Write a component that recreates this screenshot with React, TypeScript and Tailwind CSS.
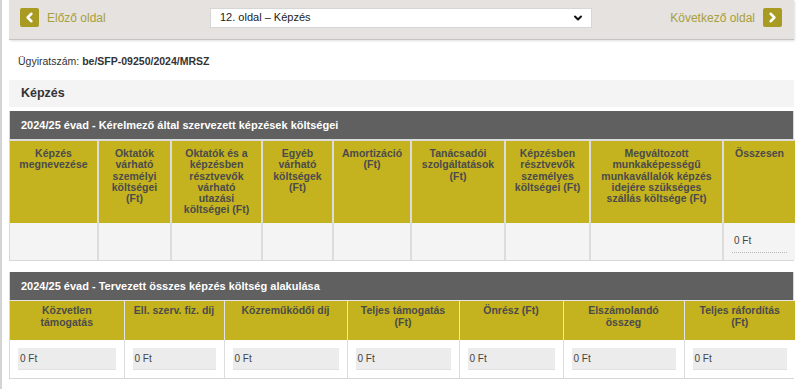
import { ChevronLeft, ChevronRight, ChevronDown } from 'lucide-react';

const costCols = [
  { w: 88, label: 'Képzés megnevezése' },
  { w: 73, label: 'Oktatók várható személyi költségei (Ft)' },
  { w: 91, label: 'Oktatók és a képzésben résztvevők várható utazási költségei (Ft)' },
  { w: 71, label: 'Egyéb várható költségek (Ft)' },
  { w: 78, label: 'Amortizáció (Ft)' },
  { w: 94, label: 'Tanácsadói szolgáltatások (Ft)' },
  { w: 85, label: 'Képzésben résztvevők személyes költségei (Ft)' },
  { w: 133, label: 'Megváltozott munkaképességű munkavállalók képzés idejére szükséges szállás költsége (Ft)' },
  { w: 72, label: 'Összesen' },
];

const totalCols = [
  { w: 114, label: 'Közvetlen támogatás' },
  { w: 100, label: 'Ell. szerv. fiz. díj' },
  { w: 123, label: 'Közreműködői díj' },
  { w: 112, label: 'Teljes támogatás (Ft)' },
  { w: 104, label: 'Önrész (Ft)' },
  { w: 121, label: 'Elszámolandó összeg' },
  { w: 111, label: 'Teljes ráfordítás (Ft)' },
];

function NavButton({ dir }: { dir: 'prev' | 'next' }) {
  const Ico = dir === 'prev' ? ChevronLeft : ChevronRight;
  return (
    <span className="flex h-[19px] w-[19px] items-center justify-center rounded-[2px] bg-[#a99b22]">
      <Ico size={15} strokeWidth={4} color="#fff" />
    </span>
  );
}

function SectionBar({ title }: { title: string }) {
  return (
    <div className="flex h-[28px] items-center bg-[#606060] px-[11px] text-[11px] font-bold text-white">
      {title}
    </div>
  );
}

export default function App() {
  return (
    <div
      className="flex h-[389px] w-[800px] border-l-2 border-[#d4d4d4] bg-white"
      style={{ fontFamily: '"Liberation Sans", Arial, sans-serif' }}
    >
      <div className="ml-[7px] w-[785px]">
        {/* page navigation */}
        <div className="flex h-[40px] items-center justify-between border-b border-[#c4c4c4] bg-[#e6e2e0] pl-[11px] pr-[12px] pb-[4px] shadow-[1px_1px_2px_rgba(0,0,0,0.12)]">
          <div className="flex w-[190px] items-center gap-[8px]">
            <NavButton dir="prev" />
            <span className="text-[12px] text-[#a8a03a]">Előző oldal</span>
          </div>
          <div className="flex h-[20px] w-[382px] items-center justify-between border border-[#d6d6d6] bg-white pl-[9px] pr-[7px] text-[11px] text-[#222]">
            <span>12. oldal – Képzés</span>
            <ChevronDown size={12} strokeWidth={4} color="#111" />
          </div>
          <div className="flex w-[190px] items-center justify-end gap-[8px]">
            <span className="text-[12px] text-[#a8a03a]">Következő oldal</span>
            <NavButton dir="next" />
          </div>
        </div>

        <div className="flex h-[40px] items-center pl-[9px] pt-[4px] text-[10.5px] text-[#333]">
          Ügyiratszám:&nbsp;<span className="font-semibold">be/SFP-09250/2024/MRSZ</span>
        </div>

        <div className="flex h-[27px] items-center bg-[#f4f4f4] px-[12px] text-[12.5px] font-bold text-[#333]">
          Képzés
        </div>

        <div className="mt-[4px] border-x border-b border-[#d8d8d8]">
          <SectionBar title="2024/25 évad - Kérelmező által szervezett képzések költségei" />
          <table className="w-full table-fixed border-collapse">
            <colgroup>
              {costCols.map((c) => (
                <col key={c.label} style={{ width: c.w }} />
              ))}
            </colgroup>
            <thead>
              <tr className="h-[83px]">
                {costCols.map((c) => (
                  <th
                    key={c.label}
                    className="border-x-2 border-t-2 border-[#dcdcdc] bg-[#c4b21f] px-[8px] pt-[7px] align-top text-[10.5px] font-bold leading-[11.3px] text-[#4b4b4b] first:border-l-0 last:border-r-0"
                  >
                    {c.label}
                  </th>
                ))}
              </tr>
            </thead>
            <tbody>
              <tr className="h-[37px] bg-[#f4f4f4]">
                {costCols.map((c, i) => (
                  <td key={c.label} className="border-x-2 border-[#dcdcdc] px-[8px] first:border-l-0 last:border-r-0">
                    {i === costCols.length - 1 && (
                      <div className="mt-[2px] border-b border-dotted border-[#b8b8b8] pb-[4px] pl-[2px] text-[10px] text-[#444]">
                        0 Ft
                      </div>
                    )}
                  </td>
                ))}
              </tr>
            </tbody>
          </table>
        </div>

        <div className="mt-[11px] border-x border-b border-[#d8d8d8]">
          <SectionBar title="2024/25 évad - Tervezett összes képzés költség alakulása" />
          <table className="w-full table-fixed border-collapse">
            <colgroup>
              {totalCols.map((c) => (
                <col key={c.label} style={{ width: c.w }} />
              ))}
            </colgroup>
            <thead>
              <tr className="h-[39px]">
                {totalCols.map((c) => (
                  <th
                    key={c.label}
                    className="border-x border-t border-[#e4e4e4] bg-[#c4b21f] px-[9px] pt-[4px] align-top text-[10.5px] font-bold leading-[11.5px] text-[#4b4b4b] first:border-l-0 last:border-r-0"
                  >
                    {c.label}
                  </th>
                ))}
              </tr>
            </thead>
            <tbody>
              <tr className="h-[38px] bg-white">
                {totalCols.map((c) => (
                  <td key={c.label} className="border-x border-[#dcdcdc] px-[8px] first:border-l-0 last:border-r-0">
                    <div className="flex h-[22px] items-center border-b border-[#e2e2e2] bg-[#ececec] pl-[2px] text-[10px] text-[#444]">
                      0 Ft
                    </div>
                  </td>
                ))}
              </tr>
            </tbody>
          </table>
        </div>
      </div>
    </div>
  );
}
